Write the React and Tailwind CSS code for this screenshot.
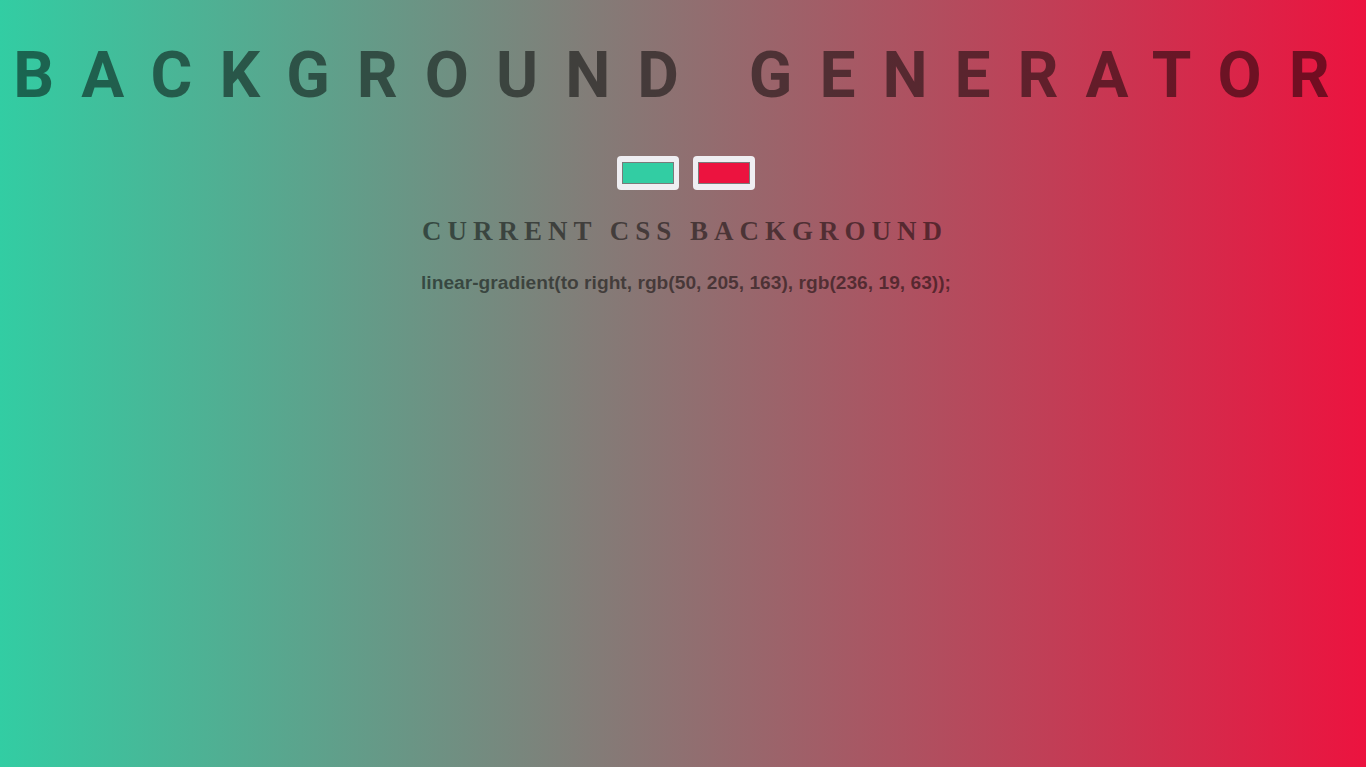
import React from 'react';

const ColorSwatch = ({ color }) => (
    <div className="flex h-[34px] w-[62px] items-center justify-center rounded-[4px] bg-[#efeef2] px-[5px] py-[6px]">
        <div className="h-full w-full border border-[#7a7a7a]" style={{ backgroundColor: color }} />
    </div>
);

const App = () => {
    const from = 'rgb(50, 205, 163)';
    const to = 'rgb(236, 19, 63)';

    return (
        <div className="flex min-h-[767px] w-full flex-col items-center overflow-hidden bg-[linear-gradient(to_right,#32cda3,#ec133f)] text-center">
            {/* Title */}
            <h1 className="ml-[4px] mt-[38px] whitespace-nowrap font-['Roboto',Arial,sans-serif] text-[64px] font-bold uppercase leading-[75px] tracking-[27px] text-black/50">
                Background Generator
            </h1>

            {/* Pickers */}
            <div className="ml-[6px] mt-[43px] flex gap-[14px]">
                <ColorSwatch color={from} />
                <ColorSwatch color={to} />
            </div>

            {/* Output */}
            <h3 className="ml-[4px] mt-[25px] font-['Liberation_Serif','Times_New_Roman',serif] text-[27px] font-bold uppercase leading-[32px] tracking-[6px] text-black/50">
                Current CSS Background
            </h3>
            <p className="ml-[6px] mt-[22px] font-['Liberation_Sans',Arial,sans-serif] text-[19.2px] font-bold text-black/50">
                linear-gradient(to right, {from}, {to});
            </p>
        </div>
    );
};

export default App;
